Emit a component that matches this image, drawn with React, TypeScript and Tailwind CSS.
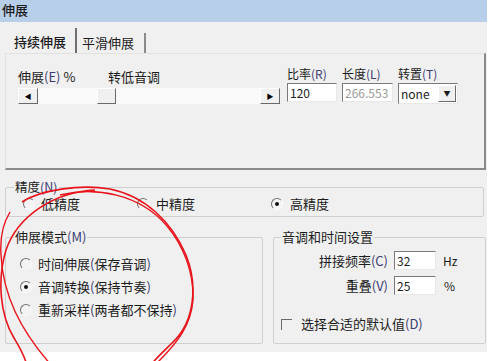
import React from 'react'

const font = { fontFamily: '"Noto Sans CJK SC", "Noto Sans", sans-serif' }

function Radio({ checked }: { checked?: boolean }) {
  return (
    <span className="relative w-[12px] h-[12px] rounded-full border border-t-[#707070] border-l-[#707070] border-b-[#f8f8f8] border-r-[#f8f8f8] bg-[#f4f4f4] flex items-center justify-center shrink-0">
      {checked && <span className="w-[4px] h-[4px] rounded-full bg-[#111]" />}
    </span>
  )
}

function ArrowButton({ dir }: { dir: 'left' | 'right' }) {
  return (
    <div className="w-[20px] h-[16px] bg-[#f0f0f0] border border-t-white border-l-white border-b-[#6a6a6a] border-r-[#6a6a6a] flex items-center justify-center shrink-0">
      <span className="text-[7px] leading-none text-black">{dir === 'left' ? '◀' : '▶'}</span>
    </div>
  )
}

function Sunken({ value, disabled, className }: { value: string; disabled?: boolean; className: string }) {
  return (
    <div
      className={
        'border border-t-[#7a7a7a] border-l-[#7a7a7a] border-b-[#e8e8e8] border-r-[#e8e8e8] bg-white px-[2px] text-[12px] leading-[17px] ' +
        (disabled ? 'text-[#9a9a9a] bg-[#f4f4f4] ' : 'text-[#222] ') +
        className
      }
    >
      {value}
    </div>
  )
}

export default function App() {
  return (
    <div className="relative w-[500px] h-[361px] bg-white overflow-hidden text-[13px] text-[#1c1c1c]" style={font}>
      <div className="w-[487px] h-[352px] bg-[#f0f0f0] flex flex-col">
        <div className="h-[22px] bg-[#b8cfe9] px-[2px] leading-[20px] font-medium text-[#1a1a1a]">伸展</div>

        {/* tabs */}
        <div className="mt-[6px] ml-[5px] w-[481px]">
          <div className="flex items-end h-[25px]">
            <div className="w-[72px] h-[25px] pl-[9px] pt-[4px] border-r-2 border-[#6f6f6f] font-medium">持续伸展</div>
            <div className="w-[69px] h-[20px] pl-[5px] pt-[1px] border-r-2 border-[#8a8a8a] leading-[18px]">平滑伸展</div>
          </div>
          <div className="h-[117px] border border-t-[#e2e2e2] border-l-[#e2e2e2] border-r-2 border-b-2 border-r-[#8a8a8a] border-b-[#8a8a8a] pl-[12px] pt-[12px] flex items-start">
            <div className="w-[262px] pt-[3px]">
              <div className="flex h-[16px] leading-[16px]">
                <span className="w-[90px]">伸展<span className="text-[#3b3b70]">(E)</span> %</span>
                <span>转低音调</span>
              </div>
              <div className="mt-[3px] flex h-[16px]">
                <ArrowButton dir="left" />
                <div className="flex-1 bg-[#f9f9f9] flex">
                  <div className="w-[59px]" />
                  <div className="w-[19px] h-[16px] bg-[#f0f0f0] border border-t-white border-l-white border-b-[#6a6a6a] border-r-[#6a6a6a]" />
                </div>
                <ArrowButton dir="right" />
              </div>
            </div>
            <div className="ml-[7px] w-[50px]">
              <div className="h-[16px] leading-[16px] text-[12px]">比率<span className="text-[#3b3b70]">(R)</span></div>
              <Sunken value="120" className="mt-[1px] h-[19px]" />
            </div>
            <div className="ml-[5px] w-[51px]">
              <div className="h-[16px] leading-[16px] text-[12px]">长度<span className="text-[#3b3b70]">(L)</span></div>
              <Sunken value="266.553" disabled className="mt-[1px] h-[19px]" />
            </div>
            <div className="ml-[5px] w-[60px]">
              <div className="h-[16px] leading-[16px] text-[12px]">转置<span className="text-[#3b3b70]">(T)</span></div>
              <div className="mt-[1px] h-[21px] flex border border-t-[#7a7a7a] border-l-[#7a7a7a] border-b-[#e8e8e8] border-r-[#e8e8e8] bg-white">
                <span className="flex-1 pl-[2px] text-[12px] leading-[19px]">none</span>
                <span className="w-[18px] h-[17px] mt-[1px] mr-[1px] bg-[#f0f0f0] border border-t-white border-l-white border-b-[#6a6a6a] border-r-[#6a6a6a] flex items-center justify-center text-[7px]">▼</span>
              </div>
            </div>
          </div>
        </div>

        {/* precision */}
        <fieldset className="mt-[11px] ml-[5px] w-[479px] border border-[#cfcfcf] rounded-[2px] pb-[5px]">
          <legend className="ml-[8px] px-[1px] text-[12.5px] leading-[12px]">精度<span className="text-[#3b3b70]">(N)</span></legend>
          <div className="flex pl-[17px] pt-[3px] h-[18px] items-center leading-[14px]">
            <label className="w-[114px] flex items-center gap-[6px]">
              <Radio />
              <span>低精度</span>
            </label>
            <label className="w-[134px] flex items-center gap-[7px]">
              <Radio />
              <span>中精度</span>
            </label>
            <label className="flex items-center gap-[7px]">
              <Radio checked />
              <span>高精度</span>
            </label>
          </div>
        </fieldset>

        <div className="mt-[13px] ml-[5px] flex gap-[10px]">
          <fieldset className="w-[258px] h-[114px] border border-[#cfcfcf] rounded-[2px]">
            <legend className="ml-[8px] px-[1px] leading-[14px]">伸展模式<span className="text-[#3b3b70]">(M)</span></legend>
            <div className="pl-[14px] pt-[12px] flex flex-col gap-[7px]">
              <label className="flex items-center gap-[6px] h-[16px]">
                <Radio />
                <span>时间伸展<span className="text-[#3b3b70]">(</span>保存音调<span className="text-[#3b3b70]">)</span></span>
              </label>
              <label className="flex items-center gap-[6px] h-[16px]">
                <Radio checked />
                <span>音调转换<span className="text-[#3b3b70]">(</span>保持节奏<span className="text-[#3b3b70]">)</span></span>
              </label>
              <label className="flex items-center gap-[6px] h-[16px]">
                <Radio />
                <span>重新采样<span className="text-[#3b3b70]">(</span>两者都不保持<span className="text-[#3b3b70]">)</span></span>
              </label>
            </div>
          </fieldset>

          <fieldset className="w-[213px] h-[114px] border border-[#cfcfcf] rounded-[2px]">
            <legend className="ml-[7px] px-[1px] leading-[14px]">音调和时间设置</legend>
            <div className="pt-[7px]">
              <div className="flex items-center h-[19px]">
                <span className="w-[114px] text-right">拼接频率<span className="text-[#3b3b70]">(C)</span></span>
                <Sunken value="32" className="ml-[6px] w-[42px] h-[19px]" />
                <span className="ml-[7px] text-[12px]">Hz</span>
              </div>
              <div className="flex items-center h-[19px] mt-[6px]">
                <span className="w-[114px] text-right">重叠<span className="text-[#3b3b70]">(V)</span></span>
                <Sunken value="25" className="ml-[6px] w-[42px] h-[19px]" />
                <span className="ml-[8px] text-[12px]">%</span>
              </div>
              <label className="mt-[21px] pl-[7px] flex items-center gap-[9px] h-[16px]">
                <span className="w-[11px] h-[11px] border-t border-l border-[#6a6a6a]" />
                <span>选择合适的默认值<span className="text-[#3b3b70]">(D)</span></span>
              </label>
            </div>
          </fieldset>
        </div>
      </div>

      {/* hand-drawn red annotation */}
      <svg className="absolute inset-0 pointer-events-none" width="500" height="361" viewBox="0 0 500 361" fill="none">
        <path d="M 22 202 C 40 190, 80 184, 110 189 C 145 196, 172 222, 186 255 C 198 285, 195 322, 172 343 C 163 352, 156 358, 150 366" stroke="#e8141c" strokeWidth="1.6" />
        <path d="M 60 195 C 95 186, 140 194, 167 226 C 183 245, 194 272, 193 300 C 191 325, 178 342, 158 362" stroke="#e8141c" strokeWidth="1.4" />
        <path d="M 95 190 C 55 192, 18 215, 6 250 C -3 280, 0 315, 14 338 C 20 348, 25 356, 27 366" stroke="#e8141c" strokeWidth="1.6" />
        <path d="M 10 212 C 2 225, 0 240, 1 255 C 3 295, 20 330, 52 366" stroke="#e8141c" strokeWidth="1.4" />
      </svg>
    </div>
  )
}
